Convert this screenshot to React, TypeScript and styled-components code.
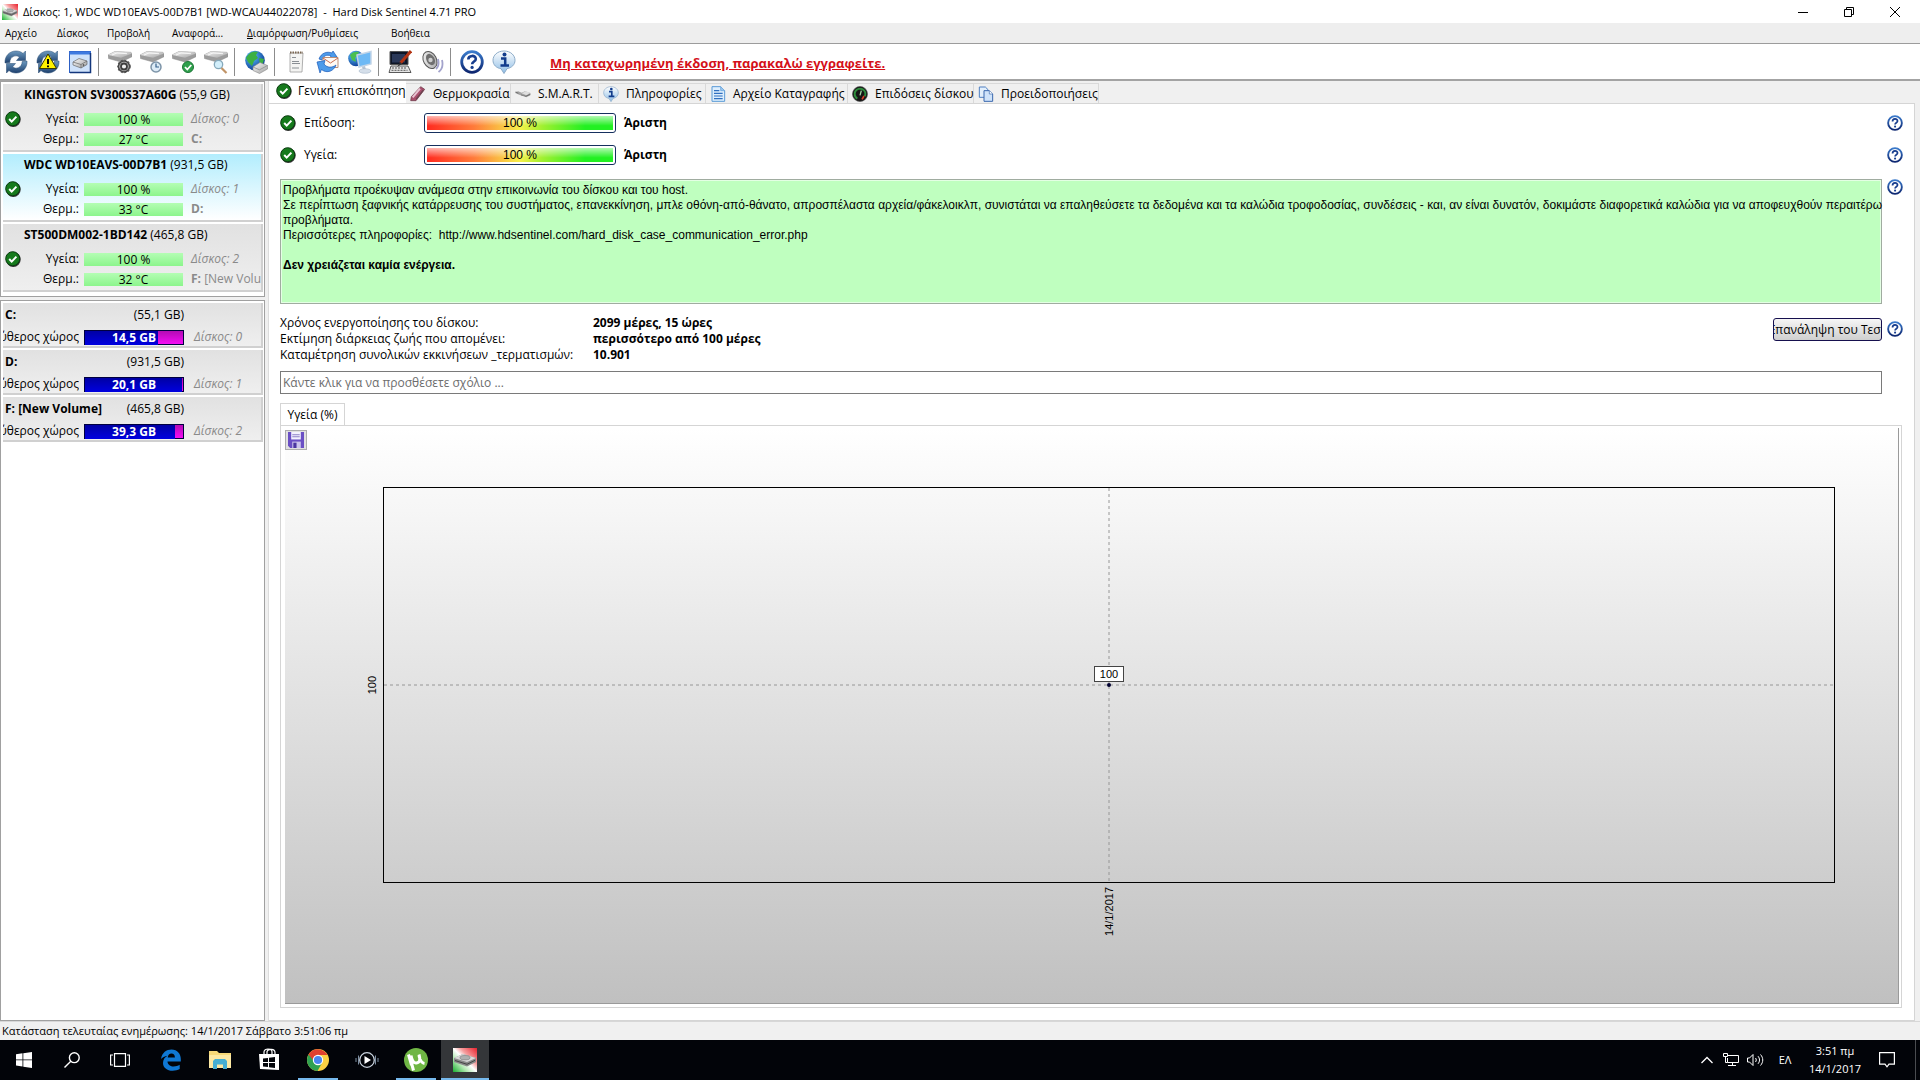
import React from "react";
import styled, { createGlobalStyle, css } from "styled-components";

const UI = '"Open Sans", "Noto Sans", sans-serif';
const ARIAL = '"Liberation Sans", Arial, sans-serif';

const GlobalStyle = createGlobalStyle`
  *, *::before, *::after { box-sizing: border-box; }
  html, body { margin: 0; height: 100%; }
  body { font: 12px/16px ${UI}; color: #000; background: #fff; overflow: hidden; }
  button, input { font: inherit; color: inherit; margin: 0; }
  svg { display: block; flex: none; }
`;

const Desktop = styled.div`
  display: flex;
  flex-direction: column;
  height: 100vh;
`;

/* ---------- title bar, menu, toolbar ---------- */

const TitleBar = styled.header`
  display: flex;
  align-items: center;
  height: 23px;
  padding: 0 2px;
  background: #fff;
`;
const WindowTitle = styled.h1`
  flex: 1;
  margin: 0;
  padding-left: 5px;
  font-size: 11px;
  font-weight: 400;
  white-space: pre;
`;
const WindowControl = styled.button`
  display: grid;
  place-items: center;
  width: 46px;
  height: 22px;
  padding: 0;
  border: 0;
  background: none;
`;
const MenuBar = styled.nav`
  display: flex;
  align-items: center;
  height: 21px;
  padding-left: 5px;
  background: #eee;
  border-bottom: 1px solid #9c9c9c;
`;
const MenuItem = styled.button<{ $width: number }>`
  width: ${(p) => p.$width}px;
  padding: 0;
  border: 0;
  background: none;
  font-size: 10px;
  text-align: left;
  white-space: nowrap;
`;
const Toolbar = styled.div`
  display: flex;
  align-items: center;
  height: 37px;
  border-bottom: 2px solid #a3a3a3;
  background: #fff;
`;
const ToolButton = styled.button`
  display: grid;
  place-items: center;
  width: 32px;
  height: 30px;
  padding: 0;
  border: 0;
  background: none;
`;
const ToolSeparator = styled.span`
  width: 1px;
  height: 28px;
  margin: 0 5px 0 2px;
  background: #8c8c8c;
`;
const RegisterLink = styled.a`
  margin-left: 30px;
  padding-top: 3px;
  color: #d40f18;
  font-weight: 700;
  font-size: 13px;
  text-decoration: underline;
`;

/* ---------- body ---------- */

const Body = styled.div`
  flex: 1;
  display: flex;
  min-height: 0;
  background: #f0f0f0;
`;
const Sidebar = styled.aside`
  display: flex;
  flex-direction: column;
  gap: 3px;
  width: 265px;
`;
const ListPanel = styled.div<{ $grow?: boolean }>`
  display: flex;
  flex-direction: column;
  gap: 2px;
  padding: 2px 1px 4px 2px;
  border: 1px solid #a0a0a0;
  background: #fff;
  ${(p) => p.$grow && css`flex: 1;`}
`;
const Card = styled.section<{ $selected?: boolean }>`
  display: grid;
  grid-template-columns: 21px 55px 99px minmax(0, 1fr);
  grid-template-rows: 25px 20px 20px;
  align-items: center;
  padding-bottom: 3px;
  border: 0 solid #d0d0d0;
  border-width: 0 2px 2px 0;
  background: ${(p) =>
    p.$selected ? "linear-gradient(#b2edfd, #fff)" : "linear-gradient(#e1e1e1, #efefef)"};
  overflow: hidden;
  height: 68px;
`;
const CardTitle = styled.h2`
  grid-column: 2 / -1;
  align-self: start;
  margin: 0;
  font-size: 12px;
  line-height: 22px;
  font-weight: 400;
  white-space: nowrap;
`;
const StatusMark = styled.span`
  grid-column: 1;
  padding-left: 2px;
`;
const FieldLabel = styled.span`
  grid-column: 2;
  text-align: right;
`;
const Meter = styled.span`
  grid-column: 3;
  height: 13px;
  margin-left: 5px;
  margin-right: -5px;
  background: linear-gradient(#b4fdb4, #8cf58c);
  text-align: center;
  line-height: 14px;
`;
const SideNote = styled.span<{ $italic?: boolean }>`
  grid-column: 4;
  padding-left: 13px;
  color: #8a8a8a;
  font-style: ${(p) => (p.$italic ? "italic" : "normal")};
  white-space: nowrap;
  overflow: hidden;
`;
const VolumeCard = styled.section`
  display: grid;
  grid-template-columns: 76px 100px minmax(0, 1fr);
  grid-template-rows: 23px 22px;
  column-gap: 5px;
  align-items: center;
  height: 45px;
  border: 0 solid #d0d0d0;
  border-width: 0 2px 2px 0;
  background: linear-gradient(#e1e1e1, #efefef);
`;
const VolumeHead = styled.div`
  grid-column: 1 / 3;
  display: flex;
  justify-content: space-between;
  padding-left: 2px;
`;
const FreeLabel = styled.span`
  display: flex;
  justify-content: flex-end;
  overflow: hidden;
  white-space: nowrap;
`;
const FreeBar = styled.span`
  display: grid;
  height: 15px;
  border: 1px solid #000040;
  background: linear-gradient(#b40cb4, #f40cf4);
`;
const FreeFill = styled.span`
  grid-area: 1 / 1;
  background: linear-gradient(#0000a4, #0000e0);
`;
const FreeText = styled.b`
  grid-area: 1 / 1;
  color: #fff;
  text-align: center;
  line-height: 14px;
`;
const VolumeNote = styled.span`
  padding-left: 5px;
  color: #8a8a8a;
  font-style: italic;
`;

/* ---------- main pane ---------- */

const Pane = styled.main`
  flex: 1;
  display: flex;
  flex-direction: column;
  min-width: 0;
  margin-left: 3px;
  border-left: 1px solid #dcdcdc;
`;
const Tabs = styled.div`
  display: flex;
  align-items: flex-end;
  height: 22px;
`;
const Tab = styled.button<{ $active?: boolean; $width: number }>`
  display: flex;
  align-items: center;
  gap: 7px;
  width: ${(p) => p.$width}px;
  height: 20px;
  padding: 0 0 0 4px;
  border: 1px solid #d9d9d9;
  border-width: 1px 1px 0 0;
  background: #f0f0f0;
  white-space: nowrap;
  ${(p) =>
    p.$active &&
    css`
      gap: 6px;
      height: 22px;
      padding-left: 7px;
      padding-bottom: 2px;
      border-width: 0;
      background: #fff;
    `}
`;
const Page = styled.div`
  flex: 1;
  display: flex;
  flex-direction: column;
  min-height: 0;
  margin-right: 5px;
  padding: 9px 11px 12px 11px;
  border: 1px solid #d5d5d5;
  border-left: 0;
  background: #fff;
`;
const WithHelp = styled.div`
  display: grid;
  grid-template-columns: minmax(0, 1fr) 16px;
  column-gap: 5px;
  align-items: start;
`;
const RateRow = styled.div`
  display: grid;
  grid-template-columns: 24px 120px 192px 1fr;
  align-items: center;
  height: 20px;
  margin-bottom: 12px;
  line-height: 18px;
`;
const RateBar = styled.div`
  height: 20px;
  padding: 2px;
  border: 1px solid #16305e;
  border-radius: 3px;
`;
const RateFill = styled.div`
  height: 14px;
  text-align: center;
  font: 12px/14px ${ARIAL};
  background:
    linear-gradient(rgba(255, 255, 255, 0.65), rgba(255, 255, 255, 0) 70%),
    linear-gradient(90deg, #ff2a20, #ff7a3a 25%, #f6f04a 50%, #a0f030 62%, #22f022 85%);
`;
const Verdict = styled.b`
  padding-left: 8px;
`;
const HelpButton = styled.button`
  display: block;
  width: 16px;
  height: 16px;
  margin-top: 2px;
  padding: 0;
  border: 0;
  background: none;
`;
const Message = styled.div`
  height: 125px;
  margin-top: 2px;
  padding: 3px 2px;
  border: 1px solid #a0aca0;
  box-shadow: inset 0 0 0 1px #e4ffe4;
  background: #bfffbf;
`;
const MessageText = styled.p`
  margin: 0 -5px 0 0;
  font: 12px/15px ${ARIAL};
  white-space: pre-wrap;
`;
const Facts = styled.dl`
  display: grid;
  grid-template-columns: 313px 1fr;
  margin: 11px 0 8px;
  dt, dd { margin: 0; }
  dd { font-weight: 700; }
`;
const FactsRow = styled(WithHelp)`
  grid-template-columns: minmax(0, 1fr) 109px 16px;
`;
const RetestButton = styled.button`
  display: flex;
  justify-content: center;
  align-items: center;
  width: 109px;
  height: 23px;
  margin-top: 14px;
  padding: 0;
  border: 1px solid #16104e;
  border-radius: 3px;
  background: linear-gradient(#f6f6f6, #cfcfcf);
  overflow: hidden;
  white-space: nowrap;
`;
const FactsHelp = styled(HelpButton)`
  margin-top: 17px;
`;
const Comment = styled.input`
  height: 23px;
  margin-right: 21px;
  padding: 0 2px;
  border: 1px solid #7a7a7a;
  background: #fff;
  &::placeholder { color: #6c6c6c; opacity: 1; }
`;
const ChartTab = styled.button`
  align-self: flex-start;
  width: 65px;
  height: 23px;
  margin-top: 9px;
  margin-bottom: -1px;
  padding: 0;
  border: 1px solid #d5d5d5;
  border-bottom-color: #fff;
  background: #fff;
  white-space: nowrap;
`;
const ChartFrame = styled.div`
  flex: 1;
  display: flex;
  min-height: 0;
  margin-right: 1px;
  padding: 2px 2px 3px 4px;
  border: 1px solid #d5d5d5;
`;
const Chart = styled.div`
  flex: 1;
  display: grid;
  grid-template-columns: 98px minmax(0, 1fr) 63px;
  grid-template-rows: 59px minmax(0, 1fr) 120px;
  border: 0 solid #9a9a9a;
  border-width: 0 1px 1px 0;
  background: linear-gradient(#fff, #c0c0c0);
`;
const SaveButton = styled.button`
  display: grid;
  place-items: center;
  width: 22px;
  height: 20px;
  margin-top: 2px;
  padding: 0;
  border: 1px solid #adadad;
  background: #e1e1e1;
`;
const AxisY = styled.span`
  grid-area: 2 / 1;
  place-self: center end;
  margin-right: 3px;
  font: 11px/16px ${ARIAL};
  writing-mode: vertical-rl;
  rotate: 180deg;
`;
const AxisX = styled.span`
  grid-area: 3 / 2;
  place-self: start center;
  margin-top: 4px;
  font: 11px/16px ${ARIAL};
  writing-mode: vertical-rl;
  rotate: 180deg;
`;
const Plot = styled.div`
  grid-area: 2 / 2;
  position: relative;
  display: grid;
  place-items: center;
  border: 1px solid #000;
`;
const PlotLines = styled.svg`
  width: 100%;
  height: 100%;
  grid-area: 1 / 1;
`;
const PointLabel = styled.span`
  position: absolute;
  left: 50%;
  bottom: calc(50% + 3px);
  translate: -50%;
  width: 30px;
  border: 1px solid #444;
  background: #fff;
  font: 11px/14px ${ARIAL};
  text-align: center;
`;
const StatusBar = styled.footer`
  height: 19px;
  padding-left: 2px;
  border-top: 1px solid #d7d7d7;
  background: #f0f0f0;
  font-size: 11px;
  line-height: 18px;
`;

/* ---------- taskbar ---------- */

const Taskbar = styled.nav`
  display: flex;
  height: 40px;
  background: #020409;
  color: #fff;
`;
const System = styled.div`
  display: flex;
  margin-right: 3px;
`;
const Apps = styled.div`
  flex: 1;
  display: flex;
  gap: 1px;
`;
const TaskButton = styled.button<{ $active?: boolean; $running?: boolean }>`
  display: grid;
  place-items: center;
  width: 48px;
  height: 40px;
  padding: 0;
  border: 0;
  background: ${(p) => (p.$active ? "#343639" : "none")};
  background-image: ${(p) => (p.$running || p.$active ? "linear-gradient(#76b9ed, #76b9ed)" : "none")};
  background-size: ${(p) => (p.$active ? "48px" : "40px")} 2px;
  background-position: bottom center;
  background-repeat: no-repeat;
`;
const Tray = styled.div`
  display: flex;
  align-items: center;
`;
const TrayButton = styled.button<{ $width: number }>`
  display: grid;
  place-items: center;
  width: ${(p) => p.$width}px;
  height: 40px;
  padding: 0;
  border: 0;
  background: none;
  font-size: 11px;
  line-height: 18px;
`;
const ShowDesktop = styled.button`
  width: 5px;
  height: 40px;
  margin-left: 8px;
  padding: 0;
  border: 0;
  border-left: 1px solid #4a4c50;
  background: none;
`;

/* ---------- icons ---------- */

const HiddenDefs = styled.svg`
  position: absolute;
`;
const Defs = () => (
  <HiddenDefs width="0" height="0" aria-hidden="true">
    <defs>
      <linearGradient id="steel" x1="0" y1="0" x2="0" y2="1">
        <stop offset="0" stopColor="#6d9ac0" />
        <stop offset="1" stopColor="#1d3f6d" />
      </linearGradient>
      <linearGradient id="metal" x1="0" y1="0" x2="1" y2="1">
        <stop offset="0" stopColor="#f8f8f8" />
        <stop offset="1" stopColor="#a2a2a2" />
      </linearGradient>
      <linearGradient id="sky" x1="0" y1="0" x2="0" y2="1">
        <stop offset="0" stopColor="#fff" />
        <stop offset="1" stopColor="#8dbde6" />
      </linearGradient>
      <radialGradient id="globe" cx=".35" cy=".3" r=".8">
        <stop offset="0" stopColor="#5cc4ff" />
        <stop offset="1" stopColor="#06308c" />
      </radialGradient>
      <linearGradient id="helpRing" x1="0" y1="0" x2="0" y2="1">
        <stop offset="0" stopColor="#3a7acb" />
        <stop offset="1" stopColor="#0d2670" />
      </linearGradient>
      <linearGradient id="flag" x1="1" y1="0" x2="0" y2="1">
        <stop offset="0" stopColor="#e8202c" />
        <stop offset=".35" stopColor="#f6a0a0" />
        <stop offset=".5" stopColor="#fff" />
        <stop offset=".7" stopColor="#b0e8b0" />
        <stop offset="1" stopColor="#18b030" />
      </linearGradient>
    </defs>
  </HiddenDefs>
);

const Svg = ({ size = 24, children }: { size?: number; children: React.ReactNode }) => (
  <svg width={size} height={size} viewBox="0 0 24 24" fill="none" aria-hidden="true">
    {children}
  </svg>
);

const CheckIcon = () => (
  <svg width="16" height="16" viewBox="0 0 16 16" fill="none" aria-hidden="true">
    <circle cx="8.3" cy="8.5" r="7.4" fill="#333" />
    <circle cx="7.7" cy="7.7" r="7" fill="#167a1c" stroke="#0a3c10" />
    <path d="M4.2 8l2.5 2.6 4.7-5" stroke="#fff" strokeWidth="2" />
  </svg>
);

const HelpIcon = ({ size = 16 }: { size?: number }) => (
  <Svg size={size}>
    <circle cx="12" cy="12" r="10.3" fill="#fff" stroke="url(#helpRing)" strokeWidth="2.8" />
    <path d="M8.3 9.6c0-4.8 7.5-4.8 7.5-.6 0 2.6-3.7 2.5-3.7 5.3" stroke="#173d8e" strokeWidth="2.6" />
    <circle cx="12.1" cy="17.4" r="1.6" fill="#173d8e" />
  </Svg>
);

const Arrows = () => (
  <>
    <path d="M1 13C.5 6 5.500 1 12 1c3 0 5.500 1 7 2.500L21.500 1v9.500h-9L15.500 7C12 4.500 6 6 5.800 12.500z" fill="url(#steel)" stroke="#23476f" strokeWidth=".5" />
    <path d="M23 11c.5 7-4.500 12-11 12-3 0-5.500-1-7-2.500L2.500 23v-9.500h9L8.500 17c3.500 2.500 9.500 1 9.700-5.500z" fill="url(#steel)" stroke="#23476f" strokeWidth=".5" />
  </>
);
const RefreshIcon = () => <Svg><Arrows /></Svg>;
const RefreshWarnIcon = () => (
  <Svg>
    <Arrows />
    <path d="M12 4l8.500 14.500h-17z" fill="#fff200" stroke="#3a3a00" strokeLinejoin="round" />
    <path d="M12 9v5M12 15.500v1.800" stroke="#000" strokeWidth="2" />
  </Svg>
);
const DiskWindowIcon = () => (
  <Svg>
    <rect x="1.500" y="1.500" width="21" height="21" fill="#cfe2fa" stroke="#2c5fc4" />
    <rect x="1.500" y="1.500" width="21" height="3" fill="#3f7be0" />
    <path d="M22.500 3v19.500H2" stroke="#13367c" strokeWidth="1.500" />
    <path d="M5 12l6-3.500 8 2.500v3.500L13 18l-8-3z" fill="url(#metal)" stroke="#555" strokeWidth=".6" />
    <path d="M5 12l8 2.500 6-3.500M13 14.500V18" stroke="#666" strokeWidth=".7" />
    <circle cx="15.500" cy="15" r=".8" fill="#333" />
  </Svg>
);
const Drive = () => (
  <>
    <path d="M0 5l7-3.500 15.500.8 1.500 1.200v3.200L13 12 .5 8.500z" fill="#9c9c9c" stroke="#8a8a8a" strokeWidth=".5" />
    <path d="M0 5l7-3.500 15.500.8 1.500 1.200-11 4.300z" fill="url(#metal)" />
    <path d="M4 5l5-2 10 .7" stroke="#fff" strokeWidth=".8" />
  </>
);
const DriveGearIcon = () => (
  <Svg>
    <Drive />
    <circle cx="16" cy="16.500" r="5.500" fill="#c9c9c9" stroke="#444" strokeWidth="1.500" />
    <circle cx="16" cy="16.500" r="3" fill="#eee" stroke="#3d3d3d" strokeWidth="1.800" />
    <circle cx="16" cy="16.500" r="6.200" stroke="#555" strokeWidth="1.200" strokeDasharray="2 1.600" />
  </Svg>
);
const DriveClockIcon = () => (
  <Svg>
    <Drive />
    <circle cx="16" cy="17" r="5" fill="#dcebf6" stroke="#7d94a8" strokeWidth="1.500" />
    <path d="M16 13.500V17h3" stroke="#35618c" strokeWidth="1.200" />
  </Svg>
);
const DriveCheckIcon = () => (
  <Svg>
    <Drive />
    <circle cx="16" cy="17" r="5.500" fill="#2fa04c" stroke="#1c7636" />
    <path d="M13 17l2.300 2.500 4-4.500" stroke="#fff" strokeWidth="1.800" />
  </Svg>
);
const DriveSearchIcon = () => (
  <Svg>
    <Drive />
    <circle cx="14.500" cy="14.500" r="4.200" fill="#d3effb" stroke="#86a9bb" strokeWidth="1.300" />
    <path d="M17.500 18l5 5" stroke="#c19467" strokeWidth="2.200" />
  </Svg>
);
const GlobeDriveIcon = () => (
  <Svg>
    <circle cx="11" cy="10.500" r="9.800" fill="url(#globe)" />
    <path d="M4 5c3-4 8-4 10-3l-2 3 2 3-4 3-2 5-4-4-2-4zM15 8l5 1-1 4-3 2z" fill="#3cb043" />
    <path d="M9 17l7-4.500 7.500 3V19l-8 4.500L9 20.500z" fill="url(#metal)" stroke="#888" strokeWidth=".6" />
    <path d="M9 17l6.500 2.800 8-4.300" stroke="#888" strokeWidth=".7" />
  </Svg>
);
const ReportIcon = () => (
  <Svg>
    <path d="M6 3h13l-1 19H6z" fill="#f4f4f2" stroke="#9c9c9c" strokeWidth=".8" />
    <path d="M6 2.500h13" stroke="#7b6650" strokeWidth="2" strokeDasharray="1.500 1" />
    <path d="M8 7.500h4M8 11.500h7M8 13.500h8M8 18h7" stroke="#8a8f94" strokeWidth="1.200" />
  </Svg>
);
const MailSyncIcon = () => (
  <Svg>
    <path d="M3 9C5 3 11 1 16 3l1-2 4 6-7 1 1-2C11 4 7 6 6 10z" fill="#4d9bea" stroke="#1a59b8" strokeWidth=".7" />
    <path d="M7 7.500h15v10H7z" fill="#fffaf4" stroke="#bb8f79" />
    <path d="M7 8l7.500 5L22 8" stroke="#c96c50" />
    <path d="M1 12l8-1.500-1 3.500c3 4 8 4 12 1-2 6-9 9-14.500 4.500L4 23z" fill="#4d9bea" stroke="#1a59b8" strokeWidth=".7" />
  </Svg>
);
const NetworkIcon = () => (
  <Svg>
    <circle cx="8" cy="8.500" r="7.800" fill="url(#globe)" />
    <path d="M2 5c2-3 6-4 9-3L9 6 7 8l1 4-4-2z" fill="#4abf50" />
    <path d="M9 5l14-3.500V14L11 17z" fill="#6db9f5" stroke="#c3d5e8" strokeWidth="1.500" />
    <path d="M14 17l3-1 1 4h-3z" fill="#b5c3d3" />
    <ellipse cx="17" cy="21" rx="6" ry="2.300" fill="#d5dfea" stroke="#9eb0c4" strokeWidth=".5" />
  </Svg>
);
const MonitorPenIcon = () => (
  <Svg>
    <path d="M2 1.500h18v13H2z" fill="#0d1526" stroke="#555" />
    <path d="M4 4h13v8.500H4z" fill="#2a3858" />
    <path d="M3 16h17l3 6.500H1z" fill="#e4e4e4" stroke="#333" strokeWidth=".8" />
    <path d="M4 18h14M3.500 20.300h16" stroke="#555" strokeDasharray="2 1" />
    <path d="M23 1L12.500 13" stroke="#b33312" strokeWidth="3" />
    <path d="M12.500 12L9 17l5-3z" fill="#333" />
  </Svg>
);
const SpeakerIcon = () => (
  <Svg>
    <ellipse cx="10" cy="10" rx="6.500" ry="9" transform="rotate(-28 10 10)" fill="url(#metal)" stroke="#555" />
    <ellipse cx="10.500" cy="9.500" rx="4" ry="6" transform="rotate(-28 10.500 9.500)" fill="#6f6f6f" />
    <circle cx="10.500" cy="10" r="2.200" fill="#cfcfcf" />
    <path d="M16 19c2.500-2 3-6 2-10M18.500 22c4-3 4.500-8 3.500-12" stroke="#a3a3cc" strokeWidth="1.800" />
  </Svg>
);
const InfoIcon = ({ size = 24 }: { size?: number }) => (
  <Svg size={size}>
    <path d="M12 1c6.500 0 11 4.200 11 9.300 0 4.500-3.500 7.500-8 8.400L12 23.500l-3-4.800C4.500 18 1 15 1 10.300 1 5.200 5.500 1 12 1z" fill="url(#sky)" stroke="#8cabc8" />
    <circle cx="12.500" cy="4.500" r="2" fill="#123c8c" />
    <path d="M9 8.500h4.200v7M8.500 15.500h8.500" stroke="#123c8c" strokeWidth="2.500" />
  </Svg>
);
const SentinelIcon = ({ size }: { size: number }) => (
  <Svg size={size}>
    <path d="M0 0h24v24H0z" fill="url(#flag)" />
    <path d="M1 10l9-4 13 4v4l-9 4.500L1 14z" fill="#8a8a8a" />
    <path d="M1 10l9-4 13 4-9 4z" fill="#d9d9d9" />
    <ellipse cx="12" cy="9.700" rx="5" ry="2.200" fill="#b0b0b0" stroke="#777" strokeWidth=".6" />
    <path d="M2 12.500l12 3.800 8-4" stroke="#444" />
  </Svg>
);
const ThermoIcon = () => (
  <Svg size={16}>
    <path d="M16 1l6 4-13 17H1l1-6z" fill="#a9506e" stroke="#64303f" />
    <path d="M15 4L4 17" stroke="#e8c3d2" strokeWidth="3" />
    <path d="M20 6L9 20" stroke="#6d4350" strokeWidth="2" />
  </Svg>
);
const SmartIcon = () => (
  <Svg size={16}>
    <path d="M0 9l5-1 5 2 5-2 8 2.500v3.500l-6 3-5-3-4 0-7-3z" fill="#a2a2a2" />
    <path d="M10 11l6-3 7 2-6 4z" fill="#dedede" />
    <path d="M1 9l4 2M9 13.500l7 2 7-3" stroke="#555" />
  </Svg>
);
const LogIcon = () => (
  <Svg size={16}>
    <path d="M3 1h13l6 6v16H3z" fill="#ddeefd" stroke="#5a9ad6" strokeWidth="1.500" />
    <path d="M16 1v6h6" fill="#9cc8f0" stroke="#5a9ad6" />
    <path d="M6 7h8M6 11h13M6 15h13M6 19h13" stroke="#2f6fc0" strokeWidth="1.800" />
  </Svg>
);
const GaugeIcon = () => (
  <Svg size={16}>
    <circle cx="12" cy="12" r="11.300" fill="#151515" stroke="#555" />
    <circle cx="12" cy="12" r="8" stroke="#2d8c3c" strokeWidth="3" strokeDasharray="36 50" transform="rotate(120 12 12)" />
    <path d="M12 14l2-7" stroke="#9bd6a0" strokeWidth="2" />
    <path d="M18 15l-3 5" stroke="#d7402a" strokeWidth="2.500" />
  </Svg>
);
const CopyIcon = () => (
  <Svg size={16}>
    <path d="M2 1.500h9l4 4V17H2z" fill="#e2effc" stroke="#4f7fc0" strokeWidth="1.500" />
    <path d="M9 7h8l5 5v11H9z" fill="#cfe3fa" stroke="#3a68ae" strokeWidth="1.500" />
    <path d="M17 7v5h5" fill="#fff" stroke="#3a68ae" />
  </Svg>
);
const SaveIcon = () => (
  <svg width="16" height="16" viewBox="0 0 15 15" aria-hidden="true">
    <path d="M0 0h15v15H2l-2-2z" fill="#6a4fc4" />
    <path d="M3 0h9v7H3z" fill="#f4f2ff" />
    <path d="M4 2h7v1H4zM4 4h7v1H4z" fill="#8c80c8" />
    <path d="M4 9h8v6H4z" fill="#cbc4ec" />
    <path d="M5 10h3v5H5z" fill="#4a35a0" />
  </svg>
);

/* ---------- data ---------- */

const menus: [React.ReactNode, number][] = [
  ["Αρχείο", 52],
  ["Δίσκος", 50],
  ["Προβολή", 65],
  ["Αναφορά...", 75],
  [<React.Fragment key="d"><u>Δ</u>ιαμόρφωση/Ρυθμίσεις</React.Fragment>, 144],
  ["Βοήθεια", 60],
];

const toolGroups: [string, React.ReactNode][][] = [
  [["Ανανέωση", <RefreshIcon />], ["Προειδοποίηση", <RefreshWarnIcon />], ["Παράθυρο δίσκου", <DiskWindowIcon />]],
  [["Ρυθμίσεις δίσκου", <DriveGearIcon />], ["Χρονοδιάγραμμα", <DriveClockIcon />], ["Έλεγχος", <DriveCheckIcon />], ["Αναζήτηση", <DriveSearchIcon />]],
  [["Διαδίκτυο", <GlobeDriveIcon />]],
  [["Αναφορά", <ReportIcon />], ["Αποστολή", <MailSyncIcon />], ["Δίκτυο", <NetworkIcon />]],
  [["Διαμόρφωση", <MonitorPenIcon />], ["Ήχος", <SpeakerIcon />]],
  [["Βοήθεια", <HelpIcon size={24} />], ["Πληροφορίες", <InfoIcon />]],
];

const drives = [
  { name: "KINGSTON SV300S37A60G", size: "(55,9 GB)", temp: "27 °C", no: 0, letter: "C:", volume: "" },
  { name: "WDC WD10EAVS-00D7B1", size: "(931,5 GB)", temp: "33 °C", no: 1, letter: "D:", volume: "", selected: true },
  { name: "ST500DM002-1BD142", size: "(465,8 GB)", temp: "32 °C", no: 2, letter: "F:", volume: " [New Volume]" },
];

const volumes = [
  { name: "C:", size: "(55,1 GB)", free: "14,5 GB", used: 74, no: 0 },
  { name: "D:", size: "(931,5 GB)", free: "20,1 GB", used: 99, no: 1 },
  { name: "F: [New Volume]", size: "(465,8 GB)", free: "39,3 GB", used: 92, no: 2 },
];

const tabs: { label: string; icon: React.ReactNode; width: number; active?: boolean }[] = [
  { label: "Γενική επισκόπηση", icon: <CheckIcon />, width: 137, active: true },
  { label: "Θερμοκρασία", icon: <ThermoIcon />, width: 105 },
  { label: "S.M.A.R.T.", icon: <SmartIcon />, width: 88 },
  { label: "Πληροφορίες", icon: <InfoIcon size={16} />, width: 107 },
  { label: "Αρχείο Καταγραφής", icon: <LogIcon />, width: 142 },
  { label: "Επιδόσεις δίσκου", icon: <GaugeIcon />, width: 126 },
  { label: "Προειδοποιήσεις", icon: <CopyIcon />, width: 125 },
];

const Help = () => (
  <HelpButton aria-label="Βοήθεια">
    <HelpIcon />
  </HelpButton>
);

const Rating = ({ label }: { label: string }) => (
  <WithHelp>
    <RateRow>
      <CheckIcon />
      <span>{label}</span>
      <RateBar>
        <RateFill>100 %</RateFill>
      </RateBar>
      <Verdict>Άριστη</Verdict>
    </RateRow>
    <Help />
  </WithHelp>
);

export default function App() {
  return (
    <Desktop>
      <GlobalStyle />
      <Defs />
      <TitleBar>
        <SentinelIcon size={16} />
        <WindowTitle>{"Δίσκος: 1, WDC WD10EAVS-00D7B1 [WD-WCAU44022078]  -  Hard Disk Sentinel 4.71 PRO"}</WindowTitle>
        <WindowControl aria-label="Ελαχιστοποίηση">
          <svg width="10" height="10" viewBox="0 0 10 10"><path d="M0 5.500h10" stroke="#000" /></svg>
        </WindowControl>
        <WindowControl aria-label="Επαναφορά">
          <svg width="10" height="10" viewBox="0 0 10 10" fill="none" stroke="#000"><path d="M.5 2.500h7v7h-7zM2.500 2.500v-2h7v7h-2" /></svg>
        </WindowControl>
        <WindowControl aria-label="Κλείσιμο">
          <svg width="10" height="10" viewBox="0 0 10 10" stroke="#000"><path d="M0 0l10 10M10 0L0 10" /></svg>
        </WindowControl>
      </TitleBar>
      <MenuBar>
        {menus.map(([label, width], i) => (
          <MenuItem key={i} $width={width}>{label}</MenuItem>
        ))}
      </MenuBar>
      <Toolbar>
        {toolGroups.map((group, g) => (
          <React.Fragment key={g}>
            {g > 0 && <ToolSeparator />}
            {group.map(([label, icon]) => (
              <ToolButton key={label} aria-label={label}>{icon}</ToolButton>
            ))}
          </React.Fragment>
        ))}
        <RegisterLink href="#register">Μη καταχωρημένη έκδοση, παρακαλώ εγγραφείτε.</RegisterLink>
      </Toolbar>

      <Body>
        <Sidebar>
          <ListPanel>
            {drives.map((d) => (
              <Card key={d.name} $selected={d.selected}>
                <CardTitle><b>{d.name}</b> {d.size}</CardTitle>
                <StatusMark><CheckIcon /></StatusMark>
                <FieldLabel>Υγεία:</FieldLabel>
                <Meter>100 %</Meter>
                <SideNote $italic>Δίσκος: {d.no}</SideNote>
                <FieldLabel>Θερμ.:</FieldLabel>
                <Meter>{d.temp}</Meter>
                <SideNote><b>{d.letter}</b>{d.volume}</SideNote>
              </Card>
            ))}
          </ListPanel>
          <ListPanel $grow>
            {volumes.map((v) => (
              <VolumeCard key={v.name}>
                <VolumeHead><b>{v.name}</b><span>{v.size}</span></VolumeHead>
                <span />
                <FreeLabel>Ελεύθερος χώρος</FreeLabel>
                <FreeBar>
                  <FreeFill style={{ width: `${v.used}%` }} />
                  <FreeText>{v.free}</FreeText>
                </FreeBar>
                <VolumeNote>Δίσκος: {v.no}</VolumeNote>
              </VolumeCard>
            ))}
          </ListPanel>
        </Sidebar>

        <Pane>
          <Tabs role="tablist">
            {tabs.map((t) => (
              <Tab key={t.label} role="tab" aria-selected={!!t.active} $active={t.active} $width={t.width}>
                {t.icon}
                {t.label}
              </Tab>
            ))}
          </Tabs>
          <Page>
            <Rating label="Επίδοση:" />
            <Rating label="Υγεία:" />
            <WithHelp>
              <Message>
                <MessageText>
                  {"Προβλήματα προέκυψαν ανάμεσα στην επικοινωνία του δίσκου και του host.\nΣε περίπτωση ξαφνικής κατάρρευσης του συστήματος, επανεκκίνηση, μπλε οθόνη-από-θάνατο, απροσπέλαστα αρχεία/φάκελοικλπ, συνιστάται να επαληθεύσετε τα δεδομένα και τα καλώδια τροφοδοσίας, συνδέσεις - και, αν είναι δυνατόν, δοκιμάστε διαφορετικά καλώδια για να αποφευχθούν περαιτέρω προβλήματα.\nΠερισσότερες πληροφορίες:  http://www.hdsentinel.com/hard_disk_case_communication_error.php\n\n"}
                  <b>Δεν χρειάζεται καμία ενέργεια.</b>
                </MessageText>
              </Message>
              <Help />
            </WithHelp>
            <FactsRow>
              <Facts>
                <dt>Χρόνος ενεργοποίησης του δίσκου:</dt>
                <dd>2099 μέρες, 15 ώρες</dd>
                <dt>Εκτίμηση διάρκειας ζωής που απομένει:</dt>
                <dd>περισσότερο από 100 μέρες</dd>
                <dt>Καταμέτρηση συνολικών εκκινήσεων _τερματισμών:</dt>
                <dd>10.901</dd>
              </Facts>
              <RetestButton><span>Επανάληψη του Τεστ</span></RetestButton>
              <FactsHelp aria-label="Βοήθεια"><HelpIcon /></FactsHelp>
            </FactsRow>
            <Comment aria-label="Σχόλιο" placeholder="Κάντε κλικ για να προσθέσετε σχόλιο ..." />
            <ChartTab>Υγεία (%)</ChartTab>
            <ChartFrame>
              <Chart>
                <SaveButton aria-label="Αποθήκευση"><SaveIcon /></SaveButton>
                <AxisY>100</AxisY>
                <Plot>
                  <PlotLines>
                    <line x1="50%" y1="0" x2="50%" y2="100%" stroke="#969696" strokeDasharray="3 3" />
                    <line x1="0" y1="50%" x2="100%" y2="50%" stroke="#969696" strokeDasharray="3 3" />
                    <circle cx="50%" cy="50%" r="2" fill="#000030" />
                  </PlotLines>
                  <PointLabel>100</PointLabel>
                </Plot>
                <AxisX>14/1/2017</AxisX>
              </Chart>
            </ChartFrame>
          </Page>
        </Pane>
      </Body>
      <StatusBar>Κατάσταση τελευταίας ενημέρωσης: 14/1/2017 Σάββατο 3:51:06 πμ</StatusBar>

      <Taskbar>
        <System>
          <TaskButton aria-label="Έναρξη">
            <svg width="16" height="16" viewBox="0 0 16 16" fill="#fff"><path d="M0 2.200l6.500-.9v6.200H0zM7.300 1.200L16 0v7.500H7.300zM0 8.300h6.500v6.200L0 13.600zM7.300 8.300H16V16l-8.700-1.200z" /></svg>
          </TaskButton>
          <TaskButton aria-label="Αναζήτηση">
            <svg width="16" height="16" viewBox="0 0 16 16" fill="none" stroke="#fff" strokeWidth="1.400"><circle cx="10.300" cy="5.700" r="4.900" /><path d="M6.800 9.200L.5 15.500" /></svg>
          </TaskButton>
          <TaskButton aria-label="Προβολή εργασιών">
            <svg width="20" height="14" viewBox="0 0 20 14" fill="none" stroke="#fff" strokeWidth="1.200"><path d="M4.500.6h11v12.800h-11zM3 2H.6v10H3M17 2h2.400v10H17" /></svg>
          </TaskButton>
        </System>
        <Apps>
          <TaskButton aria-label="Edge">
            <svg width="22" height="22" viewBox="0 0 22 22" fill="#0f78d4"><path d="M1 10C2 3.500 6.500.5 11.500.5c6 0 9.300 4.500 9.300 9.500v2.500H7.500c.2 3.500 3.200 5 6 5 2.500 0 4.500-.6 6.200-1.700v4.300c-2 1.200-4.400 1.700-7 1.700C7 21.800 3 18.600 3 14c0-3.400 1.800-6 4.600-7.300C4.600 7.300 2.300 8.500 1 10zm6.700-1.500h7.200c0-2.600-1.300-4-3.500-4-2 0-3.300 1.500-3.700 4z" /></svg>
          </TaskButton>
          <TaskButton aria-label="Εξερεύνηση αρχείων">
            <svg width="22" height="20" viewBox="0 0 22 20"><path d="M0 1h8l2 2h12v15H0z" fill="#f6d978" /><path d="M0 5h22v13H0z" fill="#fce9a3" /><path d="M4 19v-8l2-2h10l2 2v8h-4v-4.500H8V19z" fill="#45afd3" /></svg>
          </TaskButton>
          <TaskButton aria-label="Κατάστημα">
            <svg width="22" height="24" viewBox="0 0 22 24" fill="none"><path d="M6 7V4c0-4 8-4 8 0v3M9 6V3.500c1-3 8-3 8 1V7" stroke="#fff" strokeWidth="1.200" /><path d="M1 6l20 0v16L2 21z" fill="#fff" /><path d="M5 10.500l5-.6v4.100H5zM11 9.800l6-.8v5h-6zM5 15h5v4.100l-5-.6zM11 15h6v5l-6-.8z" fill="#020409" /></svg>
          </TaskButton>
          <TaskButton aria-label="Chrome" $running>
            <svg width="22" height="22" viewBox="0 0 22 22"><circle cx="11" cy="11" r="11" fill="#fbd043" /><path d="M1.500 5.500A11 11 0 0 0 10.500 22L15 14l-4-3z" fill="#2fa150" /><path d="M1.500 5.500A11 11 0 0 1 20.500 6H11l-5 5z" fill="#e0402f" /><circle cx="11" cy="11" r="5.200" fill="#fff" /><circle cx="11" cy="11" r="4.100" fill="#4a86ee" /></svg>
          </TaskButton>
          <TaskButton aria-label="Αναπαραγωγή">
            <svg width="24" height="18" viewBox="0 0 24 18" fill="none"><circle cx="12" cy="9" r="7.300" stroke="#c9d3de" strokeWidth="1.300" /><path d="M9.500 5v8l6.500-4z" fill="#fff" /><path d="M3.500 4.500v9M20.500 4.500v9M1 7v4M23 7v4" stroke="#7d8fa3" /></svg>
          </TaskButton>
          <TaskButton aria-label="µTorrent" $running>
            <svg width="24" height="24" viewBox="0 0 24 24" fill="none"><circle cx="12" cy="12" r="12" fill="#6fb644" /><path d="M4.500 6.500l3 10.500M7 7.500c1 5 2 8 5.500 7.500 3.500-.4 4-3 2.500-8.500M15 8c1 4.500 2 7 5.500 7.500M7.500 15l2 7.500" stroke="#fff" strokeWidth="3" /></svg>
          </TaskButton>
          <TaskButton aria-label="Hard Disk Sentinel" $active>
            <SentinelIcon size={24} />
          </TaskButton>
        </Apps>
        <Tray>
          <TrayButton $width={24} aria-label="Κρυφά εικονίδια">
            <svg width="12" height="8" viewBox="0 0 12 8" fill="none" stroke="#fff" strokeWidth="1.300"><path d="M.5 7L6 1.500 11.500 7" /></svg>
          </TrayButton>
          <TrayButton $width={24} aria-label="Δίκτυο">
            <svg width="16" height="14" viewBox="0 0 16 14" fill="none" stroke="#fff"><path d="M5 2.500h10.500v7H4.500V5M9.500 9.500v3M5 12.500h8M.5.500h4v3h-4zM2.500 4v5.500h2" /></svg>
          </TrayButton>
          <TrayButton $width={24} aria-label="Ένταση">
            <svg width="17" height="14" viewBox="0 0 17 14" fill="none" stroke="#fff"><path d="M.5 5h2L6 1.500v11L2.500 9h-2zM8.500 5c1 1.300 1 2.700 0 4M11 3.200c2 2.300 2 5.300 0 7.600M13.500 1.500c3 3.400 3 7.600 0 11" /></svg>
          </TrayButton>
          <TrayButton $width={36}>ΕΛ</TrayButton>
          <TrayButton $width={64}><span>3:51 πμ<br />14/1/2017</span></TrayButton>
          <TrayButton $width={40} aria-label="Κέντρο ενεργειών">
            <svg width="16" height="16" viewBox="0 0 16 16" fill="none" stroke="#fff" strokeWidth="1.200"><path d="M.6.6h14.800v11.500H10l-2 2.700-2-2.700H.6z" /></svg>
          </TrayButton>
          <ShowDesktop aria-label="Επιφάνεια εργασίας" />
        </Tray>
      </Taskbar>
    </Desktop>
  );
}
